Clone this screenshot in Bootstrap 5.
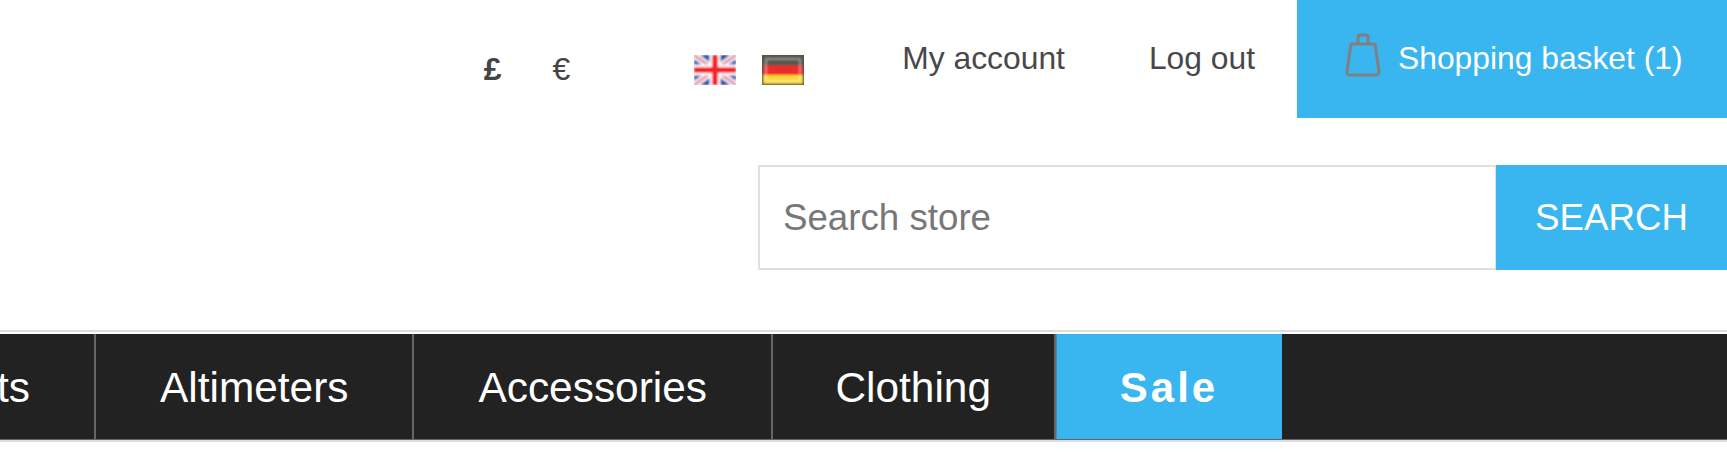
<!DOCTYPE html>
<html lang="en">
<head>
  <meta charset="UTF-8">
  <title>Store header</title>
  <link href="https://cdn.jsdelivr.net/npm/bootstrap@5.3.0/dist/css/bootstrap.min.css" rel="stylesheet">
  <style>
    body { font-family: "Liberation Sans", Arial, sans-serif; color: #444; background: #fff; overflow: hidden; }
    .top-bar { height: 118px; }
    .currency-link { font-size: 32px; line-height: 1; color: #444; text-decoration: none; margin-top: 20px; }
    .currency-gbp { font-weight: 700; margin-right: 51px; }
    .flag-group { margin-left: 124px; margin-right: 98px; margin-top: 22px; gap: 26px; }
    .flag-img { display: block; width: 42px; height: 30px; }
    .account-link { font-size: 31.8px; color: #484848; text-decoration: none; margin-right: 84px; }
    .basket-link { width: 430px; height: 118px; margin-left: -42px; background: #39b5f0; color: #fff; font-size: 31.8px; text-decoration: none; padding-left: 48px; }
    .basket-icon { width: 36px; height: 44px; margin-right: 17px; margin-top: -8px; }
    .search-row { height: 105px; margin-top: 47px; }
    .search-group { width: 969px; }
    .search-group .form-control { height: 105px; font-size: 36.7px; padding: 0 23px; border: 2px solid #e0e0e0; color: #777; }
    .search-group .form-control::placeholder { color: #777; }
    .search-btn { width: 231px; font-size: 36.7px; background: #39b5f0; color: #fff; border: 0; }
    .search-btn:hover { background: #39b5f0; color: #fff; }
    .main-menu { margin-top: 60px; border-top: 2px solid #ddd; border-bottom: 2px solid #ddd; padding-top: 2px; }
    .menu-strip { height: 106px; background: #222; border-bottom: 1px solid #666; }
    .menu-item { color: #fff; font-size: 42.4px; text-decoration: none; padding: 2px 64px 0; border-right: 2px solid #666; white-space: nowrap; }
    .menu-first { width: 96px; padding: 2px 64px 0 0; overflow: hidden; }
    .menu-narrow { padding: 2px 62.5px 0; }
    .menu-sale { background: #39b5f0; font-weight: 700; font-size: 42px; letter-spacing: 3px; width: 226px; padding: 2px 0 0; border-right: 0; border-left: 1px solid #4f8ba8; }
  </style>
</head>
<body>
  <div class="top-bar d-flex justify-content-end align-items-center">
    <a class="currency-link currency-gbp" href="#">£</a>
    <a class="currency-link" href="#">€</a>
    <div class="flag-group d-flex">
      <svg class="flag-img" viewBox="0 0 42 30">
        <defs>
          <filter id="soft"><feGaussianBlur stdDeviation="0.9"/></filter>
          <filter id="softer"><feGaussianBlur stdDeviation="0.45"/></filter>
        </defs>
        <g filter="url(#soft)">
          <rect width="42" height="30" fill="#2444a5"/>
          <path d="M0 0 42 30M42 0 0 30" stroke="#f4f4fa" stroke-width="7"/>
          <path d="M0 0 42 30M42 0 0 30" stroke="#e8596a" stroke-width="2"/>
          <path d="M21 0V30M0 15H42" stroke="#fff" stroke-width="11"/>
          <path d="M21 0V30M0 15H42" stroke="#f4222e" stroke-width="6"/>
        </g>
      </svg>
      <svg class="flag-img" viewBox="0 0 42 30">
        <rect width="42" height="30" fill="#55533f"/>
        <g filter="url(#soft)">
          <rect x="1" y="1" width="40" height="9.500" fill="#56564f"/>
          <rect x="1" y="10.500" width="40" height="9.500" fill="#ee2b2b"/>
          <rect x="1" y="20" width="40" height="9" fill="#f8d838"/>
          <rect x="4" y="4" width="34" height="22" fill="none" stroke="#fff" stroke-opacity=".45" stroke-width="1.500"/>
        </g>
      </svg>
    </div>
    <a class="account-link" href="#">My account</a>
    <a class="account-link" href="#">Log out</a>
    <a class="basket-link d-flex align-items-center" href="#">
      <svg class="basket-icon" viewBox="0 0 36 44" fill="none" stroke="#808080" stroke-width="3" stroke-linejoin="round">
        <g filter="url(#softer)">
          <path d="M7.500 11H28.500Q30 11 30.300 12.500L34 38.500Q34.500 42 31 42H5Q1.500 42 2 38.500L5.700 12.500Q6 11 7.500 11Z"/>
          <path d="M13 11V4Q13 2 15 2H21Q23 2 23 4V11"/>
        </g>
      </svg>
      <span>Shopping basket (1)</span>
    </a>
  </div>

  <div class="search-row d-flex justify-content-end">
    <form class="search-group input-group">
      <input type="text" class="form-control rounded-0 shadow-none" placeholder="Search store">
      <button type="button" class="btn search-btn rounded-0">SEARCH</button>
    </form>
  </div>

  <nav class="main-menu">
    <div class="menu-strip d-flex">
      <a class="menu-item menu-first d-flex justify-content-end align-items-center" href="#">Products</a>
      <a class="menu-item d-flex align-items-center" href="#">Altimeters</a>
      <a class="menu-item d-flex align-items-center" href="#">Accessories</a>
      <a class="menu-item menu-narrow d-flex align-items-center" href="#">Clothing</a>
      <a class="menu-item menu-sale d-flex justify-content-center align-items-center" href="#">Sale</a>
    </div>
  </nav>
  <script src="https://cdn.jsdelivr.net/npm/bootstrap@5.3.0/dist/js/bootstrap.bundle.min.js"></script>
</body>
</html>
